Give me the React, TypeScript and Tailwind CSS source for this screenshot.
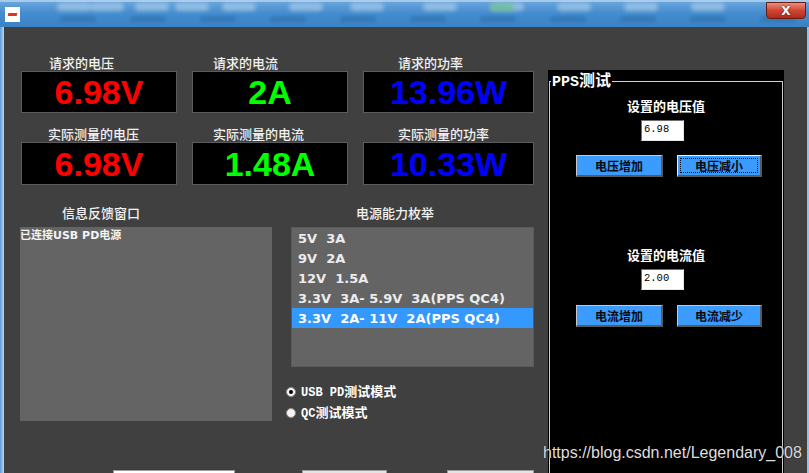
import React from 'react';

const meterRows = [
  [
    { label: '请求的电压', value: '6.98V', color: 'text-[#ff0000]', pad: 'pl-[28px]' },
    { label: '请求的电流', value: '2A', color: 'text-[#00ff00]', pad: 'pl-[21px]' },
    { label: '请求的功率', value: '13.96W', color: 'text-[#0000ff]', pad: 'pl-[35px]' },
  ],
  [
    { label: '实际测量的电压', value: '6.98V', color: 'text-[#ff0000]', pad: 'pl-[27px]' },
    { label: '实际测量的电流', value: '1.48A', color: 'text-[#00ff00]', pad: 'pl-[21px]' },
    { label: '实际测量的功率', value: '10.33W', color: 'text-[#0000ff]', pad: 'pl-[35px]' },
  ],
];

const capabilities = [
  '5V  3A',
  '9V  2A',
  '12V  1.5A',
  '3.3V  3A- 5.9V  3A(PPS QC4)',
  '3.3V  2A- 11V  2A(PPS QC4)',
];

const blobs = [57, 90, 135, 175, 222, 289, 350, 423, 490, 557, 624, 691];

function TitleBar() {
  return (
    <div className="relative h-[27px] shrink-0 overflow-hidden bg-[#3f87c9] bg-linear-to-b from-[#6ea8de] via-[#438cce] to-[#3a82c4]">
      <div className="absolute left-0 right-0 top-0 h-[2px] bg-[#bcd8f2]/70" />
      {blobs.map((x, i) => (
        <div
          key={i}
          className="absolute top-[3px] h-[8px] w-[34px] rounded-sm bg-white/35 blur-[2px]"
          style={{ left: x }}
        />
      ))}
      <div className="absolute left-[490px] top-[4px] h-[7px] w-[24px] rounded-sm bg-[#5cc26a]/60 blur-[2px]" />
      <div className="absolute left-0 right-0 top-[16px] flex gap-[34px] pl-[60px] opacity-30">
        {blobs.slice(0, 11).map((_, i) => (
          <div key={i} className="h-[6px] w-[36px] rounded-sm bg-[#1f5a94] blur-[1.5px]" />
        ))}
      </div>
      <div className="absolute left-[5px] top-[7px] flex h-[15px] w-[15px] items-center justify-center bg-white">
        <div className="h-[3px] w-[9px] -skew-x-12 bg-[#e0322a]" />
      </div>
      <div className="absolute right-[3px] top-[2px] flex h-[17px] w-[40px] items-center justify-center rounded-b-[4px] border border-[#6b1a14] bg-[#c23a2a] bg-linear-to-b from-[#e98d7c] via-[#cf4533] to-[#b02a1a]">
        <span className="font-['DejaVu_Sans',sans-serif] text-[12px] font-bold leading-none text-white [text-shadow:0_0_2px_#3a0a05]">
          X
        </span>
      </div>
    </div>
  );
}

function Meters() {
  return (
    <div className="flex flex-col">
      {meterRows.map((row, r) => (
        <div key={r} className={r === 0 ? '' : 'mt-[13px]'}>
          <div className="grid grid-cols-[156px_156px_171px] gap-x-[15px]">
            {row.map((m) => (
              <div
                key={m.label}
                className={`${m.pad} h-[16px] font-['Noto_Sans_CJK_SC',sans-serif] text-[13px] font-medium leading-[16px] text-[#f2f2f2]`}
              >
                {m.label}
              </div>
            ))}
            {row.map((m) => (
              <div
                key={m.value + m.label}
                className={`flex ${r === 0 ? 'h-[42px]' : 'h-[43px]'} items-center justify-center border border-[#5c5c5c] bg-black`}
              >
                <span
                  className={`font-['Liberation_Sans',Arial,sans-serif] text-[34px] font-bold leading-none ${m.color}`}
                >
                  {m.value}
                </span>
              </div>
            ))}
          </div>
        </div>
      ))}
    </div>
  );
}

function Radio({ checked, latin, cjk }: { checked?: boolean; latin: string; cjk: string }) {
  return (
    <div className="flex h-[21px] items-center gap-[5px]">
      <div className="flex h-[10px] w-[10px] items-center justify-center rounded-full border border-[#8c8c8c] bg-[#f4f4f4]">
        {checked && <div className="h-[4px] w-[4px] rounded-full bg-black" />}
      </div>
      <span className="flex items-baseline leading-[16px] text-white">
        <span className="font-['Liberation_Mono',monospace] text-[12px] font-bold">{latin}</span>
        <span className="font-['Noto_Sans_CJK_SC',sans-serif] text-[13px] font-bold">{cjk}</span>
      </span>
    </div>
  );
}

function PpsButton({ text, focused }: { text: string; focused?: boolean }) {
  return (
    <div
      className={`flex h-[22px] items-center justify-center border-b-2 border-l border-r-2 border-t border-b-[#5a5a5a] border-r-[#5a5a5a] ${
        focused ? 'border-l-[#f0f0f0] border-t-[#f0f0f0]' : 'border-l-[#c8c8c8] border-t-[#c8c8c8]'
      } bg-[#3b9bff] p-[2px]`}
    >
      <div
        className={`flex h-full w-full items-center justify-center ${
          focused ? 'border border-dotted border-black' : 'border border-transparent'
        }`}
      >
        <span className="font-['Noto_Sans_CJK_SC',sans-serif] text-[12px] font-bold leading-none text-[#0a0a0a]">
          {text}
        </span>
      </div>
    </div>
  );
}

function ValueInput({ value }: { value: string }) {
  return (
    <div className="ml-[91px] h-[21px] w-[43px] border border-b-[#e6e6e6] border-l-[#6e6e6e] border-r-[#e6e6e6] border-t-[#6e6e6e] bg-white pl-[2px] pt-[2px] font-['Liberation_Mono',monospace] text-[10.5px] leading-[13px] text-black">
      {value}
    </div>
  );
}

function PpsPanel() {
  return (
    <div className="ml-[14px] mt-[43px] w-[236px] self-stretch bg-black px-[1px] pt-[1px]">
      <fieldset className="h-[420px] border border-b-0 border-[#cfcfcf]">
        <legend className="ml-[1px] px-[1px] leading-[16px] text-white">
          <span className="font-['Liberation_Mono',monospace] text-[15px] font-bold">PPS</span>
          <span className="font-['Noto_Sans_CJK_SC',sans-serif] text-[16px] font-bold">测试</span>
        </legend>
        <div className="mt-[7px] text-center font-['Noto_Sans_CJK_SC',sans-serif] text-[13px] font-bold leading-[16px] text-white">
          设置的电压值
        </div>
        <div className="mt-[6px]">
          <ValueInput value="6.98" />
        </div>
        <div className="ml-[26px] mt-[14px] grid w-[186px] grid-cols-[87px_85px] gap-x-[14px]">
          <PpsButton text="电压增加" />
          <PpsButton text="电压减小" focused />
        </div>
        <div className="mt-[70px] text-center font-['Noto_Sans_CJK_SC',sans-serif] text-[13px] font-bold leading-[16px] text-white">
          设置的电流值
        </div>
        <div className="mt-[6px]">
          <ValueInput value="2.00" />
        </div>
        <div className="ml-[26px] mt-[15px] grid w-[186px] grid-cols-[87px_85px] gap-x-[14px]">
          <PpsButton text="电流增加" />
          <PpsButton text="电流减少" />
        </div>
      </fieldset>
    </div>
  );
}

export default function App() {
  return (
    <div className="relative flex h-[473px] w-[809px] flex-col overflow-hidden bg-[#4a8ccb]">
      <TitleBar />
      <div className="flex min-h-0 flex-1">
        <div className="w-[4px] bg-[#7fb6e4] bg-linear-to-r from-[#5d9ad4] to-[#b4d9f4]" />
        <div className="flex min-h-0 flex-1 overflow-hidden bg-[#404040]">
          <div className="w-[530px] shrink-0 pl-[17px] pt-[28px]">
            <Meters />

            <div className="mt-[20px] grid grid-cols-[251px_243px] gap-x-[19px]">
              <div className="pl-[41px] font-['Noto_Sans_CJK_SC',sans-serif] text-[13px] font-medium leading-[16px] text-[#f2f2f2]">
                信息反馈窗口
              </div>
              <div className="pl-[65px] font-['Noto_Sans_CJK_SC',sans-serif] text-[13px] font-medium leading-[16px] text-[#f2f2f2]">
                电源能力枚举
              </div>

              <div className="-ml-[1px] mt-[6px] h-[194px] w-[252px] bg-[#646464] pt-[2px] font-['DejaVu_Sans','Noto_Sans_CJK_SC',sans-serif] text-[11px] font-bold leading-[13px] text-[#f4f4f4]">
                已连接USB PD电源
              </div>

              <div className="mt-[6px] flex flex-col">
                <div className="h-[140px] border border-[#5a5a5a] bg-[#646464]">
                  {capabilities.map((c, i) => (
                    <div
                      key={c}
                      className={`h-[20px] whitespace-pre pl-[6px] pt-[1px] font-['DejaVu_Sans',sans-serif] text-[13px] font-bold leading-[20px] ${
                        i === 4 ? 'bg-[#3399ff] text-white' : 'text-[#ececec]'
                      }`}
                    >
                      {c}
                    </div>
                  ))}
                </div>
                <div className="-ml-[5px] mt-[14px]">
                  <Radio checked latin="USB PD" cjk="测试模式" />
                  <Radio latin="QC" cjk="测试模式" />
                </div>
              </div>
            </div>

            <div className="ml-[92px] mt-[47px] flex gap-[67px]">
              <div className="h-[20px] w-[122px] border border-[#9a9a9a] bg-white" />
              <div className="h-[20px] w-[86px] border border-[#9a9a9a] bg-[#e4e4e4]" />
              <div className="-ml-[7px] h-[20px] w-[87px] border border-[#9a9a9a] bg-[#e4e4e4]" />
            </div>
          </div>
          <PpsPanel />
        </div>
        <div className="w-[2px] bg-[#8fc3ec]" />
      </div>

      <div className="absolute left-[543px] top-[443px] font-['Liberation_Sans',Arial,sans-serif] text-[16px] leading-[20px] text-[#dedede] [text-shadow:0_0_1px_#000]">
        https://blog.csdn.net/Legendary_008
      </div>
    </div>
  );
}
